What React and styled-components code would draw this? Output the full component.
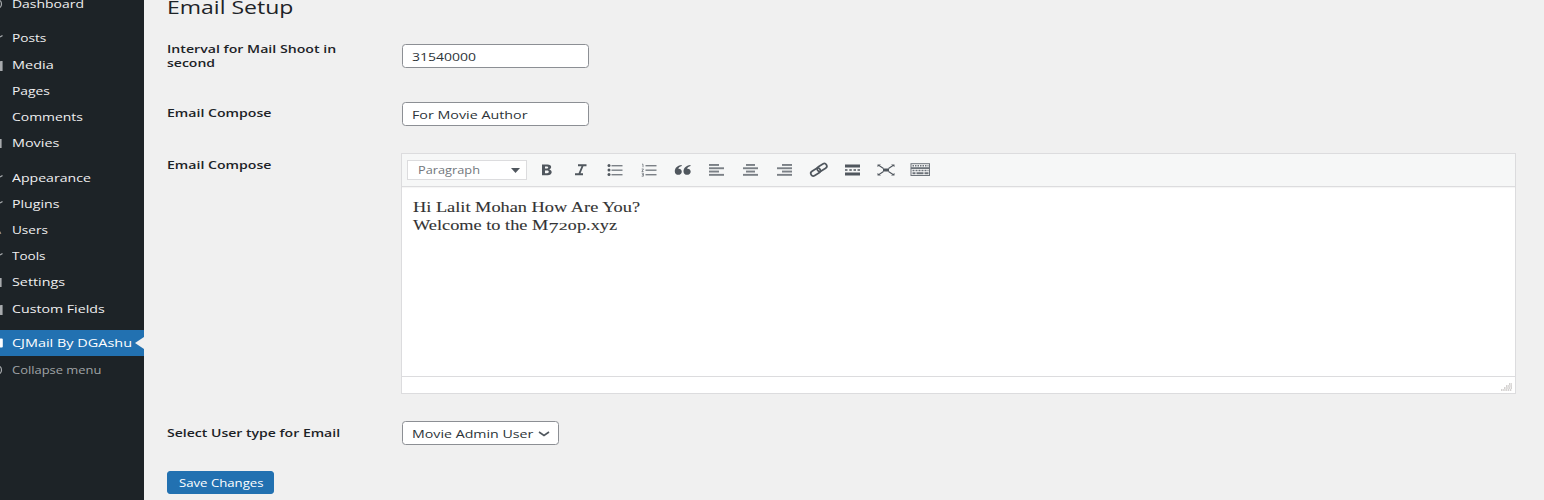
import React, { useLayoutEffect, useRef, useState } from "react";
import styled, { createGlobalStyle } from "styled-components";

const Global = createGlobalStyle`
  *{box-sizing:border-box}
  html,body{margin:0;background:#f0f0f0}
  body{font-family:"Open Sans","Noto Sans",sans-serif;color:#1d2327;overflow:hidden}
`;

const FitBox = styled.span`
  display:block;flex:none;width:${p => p.$w}px;white-space:nowrap;text-align:left;
`;
const FitInner = styled.span`
  display:inline-block;transform-origin:0 50%;white-space:pre;
`;
function Fit({ w, children }) {
  const ref = useRef(null);
  const [k, setK] = useState(1);
  useLayoutEffect(() => { setK(w / ref.current.offsetWidth); }, [w]);
  return <FitBox $w={w}><FitInner ref={ref} style={{ transform: `scaleX(${k})` }}>{children}</FitInner></FitBox>;
}

const Page = styled.div`display:flex;width:1544px;height:500px;overflow:hidden;`;
const Sidebar = styled.nav`
  width:144px;flex:none;background:#1d2327;height:500px;overflow:hidden;
`;
const Menu = styled.div`margin-top:-9px;display:flex;flex-direction:column;gap:8.2px;width:144px;`;
const Group = styled.div``;
const Item = styled.div`
  height:26.2px;display:flex;align-items:center;font-size:11.5px;line-height:16px;
  padding-top:${p => p.$muted ? 1 : 0}px;
  color:${p => p.$muted ? "#a0a3a6" : p.$active ? "#fff" : "#f0f0f1"};
  background:${p => p.$active ? "#2271b1" : "transparent"};
`;
const IconSlot = styled.span`width:12px;height:16px;flex:none;svg{display:block}`;
const Arrow = styled.i`
  margin-left:auto;width:0;height:0;border:solid transparent;border-width:6.5px 9px 6.5px 0;border-right-color:#f0f0f0;
`;
const glyphs = {
  half: <path d="M0 4.500C2 6 2 10 0 11.500" fill="none" stroke="#a7aaad" strokeWidth="1.2" />,
  pin: <path d="M0 7L2.500 5.500" stroke="#a7aaad" strokeWidth="1.3" />,
  block: <rect x="0" y="4" width="2.6" height="10" rx=".5" fill="#a7aaad" />,
  thin: <rect x="0" y="4" width="1.6" height="9" fill="#a7aaad" />,
  user: <path d="M0 9.500L.8 12" stroke="#a7907a" fill="none" />,
  mail: <rect x="-3" y="3.5" width="5.8" height="9" rx="1" fill="#fff" />,
};
const entries = [
  [["Dashboard", 71.5, "half"]],
  [["Posts", 34.5, "pin"], ["Media", 41.5, "block"], ["Pages", 38.5], ["Comments", 71.5], ["Movies", 47.5, "thin"]],
  [["Appearance", 78.5, "pin"], ["Plugins", 48, "pin"], ["Users", 36.5, "user"], ["Tools", 34, "pin"], ["Settings", 53.5, "thin"], ["Custom Fields", 92.5, "block"]],
  [["CJMail By DGAshu", 120.5, "mail", "active"], ["Collapse menu", 90, "half", "muted"]],
];

const Content = styled.main`flex:1;padding:0 0 0 23px;min-width:0;`;
const Title = styled.h1`margin:-5px 0 0;font-weight:400;font-size:18px;line-height:24px;height:24px;`;
const Row = styled.div`display:flex;align-items:flex-start;margin-top:${p => p.$mt}px;height:${p => p.$h}px;`;
const Label = styled.label`
  width:${p => p.$w || 235}px;flex:none;font-size:11.4px;line-height:14px;font-weight:600;
  padding-top:${p => p.$pt || 0}px;margin-top:${p => p.$mt || 0}px;
`;
const Field = styled.div`
  width:${p => p.$w}px;height:24px;border:1px solid #8c8f94;border-radius:3.500px;background:#fff;color:#2c3338;
  display:flex;align-items:center;padding:1px 8px 0 8.500px;font-size:11.5px;line-height:16px;justify-content:space-between;
`;
const Editor = styled.section`width:1115px;height:241px;border:1px solid #dcdcde;background:#fff;display:flex;flex-direction:column;`;
const Toolbar = styled.div`
  height:33px;flex:none;background:#f6f7f7;border-bottom:1px solid #dcdcde;display:flex;align-items:center;padding-left:5px;
  box-shadow:0 1px 1px rgba(0,0,0,.04);
`;
const Format = styled.div`
  width:120px;height:20px;border:1px solid #dcdcde;background:#fff;display:flex;align-items:center;justify-content:space-between;
  padding:0 6px 0 10px;font-size:10.3px;line-height:14px;color:#72777c;margin-right:3px;
`;
const Tool = styled.span`width:34px;height:20px;flex:none;display:flex;align-items:center;justify-content:center;svg{display:block}`;
const Body = styled.div`
  flex:1;padding:12px 0 0 11px;font-family:"Liberation Serif",serif;font-size:14px;line-height:18px;color:#333;
  -webkit-text-stroke:.1px #333;
`;
const Low = styled.span`display:inline-block;transform:translateY(2.500px) scaleX(1.1);margin:0 .4px;`;
const Small = styled.span`display:inline-block;font-size:10.5px;transform:scaleX(1.3);margin:0 1.800px;`;
const Status = styled.div`height:17px;border-top:1px solid #dcdcde;display:flex;justify-content:flex-end;align-items:flex-end;padding:0 3px 2px 0;`;
const Save = styled.button`
  margin:26px 0 0;padding:1px 0 0 10.500px;width:107px;height:23px;border:1px solid #2271b1;border-radius:3px;background:#2271b1;
  color:#fff;font:11px/16px "Open Sans",sans-serif;display:flex;align-items:center;
`;

const C = "#50575e";
const bars = (rows) => rows.map(([x, w], i) => <rect key={i} x={x} y={4 + i * 3.3} width={w} height="1.9" fill="#7b8086" />);
const list = <g fill="#7b8086"><rect x="7.500" y="5" width="11" height="1.4" /><rect x="7.500" y="9.5" width="11" height="1.4" /><rect x="7.500" y="14" width="11" height="1.4" /></g>;
const tools = [
  <path d="M6 4.500h5.500c4.700 0 4.500 4.100 1.700 5 3.800.8 3.300 5.700-1.500 5.700H6zM9 6.400v2.200h1.900c1.800 0 1.800-2.200 0-2.200zM9 10.500v2.700h2.100c2.300 0 2.300-2.700 0-2.700z" fill={C} fillRule="evenodd" />,
  <path d="M8 5.300h8.500M5 14.300h8M13 5L9 14.500" stroke={C} strokeWidth="1.9" fill="none" />,
  <g>{list}<g fill={C}><circle cx="5" cy="5.6" r="1.500" /><circle cx="5" cy="10.1" r="1.500" /><circle cx="5" cy="14.6" r="1.500" /></g></g>,
  <g>{list}<path d="M4 4.200h1v3M3.700 9h1.800L3.900 11.500h1.600M3.700 13.200h1.700v3H3.700M4 14.700h1.400" stroke="#7b8086" strokeWidth=".9" fill="none" /></g>,
  <path d="M9.700 5C5 5.400 2.800 8.300 2.800 11.400c0 4.700 7 4.300 7 .3 0-2.200-1.900-3.200-3.500-2.900.4-1.500 1.700-2.300 3.400-2.700zM18.500 5c-4.700.4-7 3.300-7 6.400 0 4.700 7.200 4.300 7.200.3 0-2.200-1.900-3.200-3.600-2.900.4-1.500 1.700-2.300 3.400-2.700z" fill={C} />,
  <g>{bars([[3, 10], [3, 15], [3, 10], [3, 15]])}</g>,
  <g>{bars([[6, 9], [3, 15], [6, 9], [3, 15]])}</g>,
  <g>{bars([[8, 10], [3, 15], [8, 10], [3, 15]])}</g>,
  <g fill="none" stroke={C} strokeWidth="1.7"><rect x="-5.200" y="-2.6" width="10.400" height="5.2" rx="2.6" transform="translate(14 7.500) rotate(-32)" /><rect x="-5.200" y="-2.600" width="10.400" height="5.200" rx="2.600" transform="translate(7.600 12) rotate(-32)" /></g>,
  <g fill={C}><rect x="3" y="4.500" width="15" height="3" /><rect x="3" y="12.500" width="15" height="3" /><path d="M3 9.300h2.500v1.400H3zM7.300 9.300h2.500v1.400H7.300zM11.500 9.300h2.500v1.400h-2.500zM15.500 9.300H18v1.400h-2.500z" /></g>,
  <g transform="translate(-1 0)"><path d="M4 5.500L8.500 8.500M18 5.500L13.500 8.500M4 14.500L8.500 11.500M18 14.500L13.500 11.500" stroke={C} strokeWidth="1.1" /><rect x="8" y="8.500" width="6" height="3" fill={C} /><path d="M2.500 4.500h3.500l-3.500 2.500zM19.500 4.500H16l3.500 2.500zM2.500 15.500H6l-3.500-2.500zM19.500 15.500H16l3.500-2.500z" fill={C} /></g>,
  <g fill="none" stroke="#6d737a" transform="translate(-.5 0)"><rect x="1.500" y="3.700" width="18.500" height="4" /><path d="M3 5.700h16" strokeDasharray="1.500 1" strokeWidth="1.500" /><rect x="1.500" y="8.500" width="18.500" height="7" /><path d="M3 10.500h16" strokeDasharray="2 1" strokeWidth="1.300" /><path d="M3 13.200h3M7 13.200h7M15 13.200h4" strokeWidth="2" /></g>,
];

export default function App() {
  return <><Global /><Page>
    <Sidebar><Menu>{entries.map((g, i) => <Group key={i}>{g.map(([t, w, icon, state]) =>
      <Item key={t} $active={state === "active"} $muted={state === "muted"}>
        <IconSlot>{icon && <svg width="12" height="16">{glyphs[icon]}</svg>}</IconSlot>
        <Fit w={w}>{t}</Fit>{state === "active" && <Arrow />}
      </Item>)}</Group>)}</Menu></Sidebar>
    <Content>
      <Title><Fit w={126.5}>Email Setup</Fit></Title>
      <Row $mt={25} $h={58}><Label $mt={-2}><Fit w={169}>Interval for Mail Shoot in</Fit><Fit w={48}>second</Fit></Label><Field $w={187}><Fit w={64.5}>31540000</Fit></Field></Row>
      <Row $mt={0} $h={51}><Label $pt={4}><Fit w={104}>Email Compose</Fit></Label><Field $w={187}><Fit w={115.5}>For Movie Author</Fit></Field></Row>
      <Row $mt={0} $h={241}><Label $w={234} $pt={5}><Fit w={104}>Email Compose</Fit></Label>
        <Editor>
          <Toolbar><Format><Fit w={62}>Paragraph</Fit><svg width="9" height="5"><path d="M0 0h9L4.500 5z" fill={C} /></svg></Format>
            {tools.map((t, i) => <Tool key={i}><svg width="22" height="20">{t}</svg></Tool>)}
          </Toolbar>
          <Body><Fit w={226.5}>Hi Lalit Mohan How Are You?</Fit><Fit w={204}>Welcome to the M<Low>7</Low><Small>20</Small>p.xyz</Fit></Body>
          <Status><svg width="11" height="8"><path d="M0 7h11M3 5h8M5 3h6M8 1h3" stroke="#a9a4a2" strokeDasharray="1.500 .7" /></svg></Status>
        </Editor></Row>
      <Row $mt={27} $h={24}><Label $pt={5}><Fit w={172.5}>Select User type for Email</Fit></Label>
        <Field $w={157}><Fit w={121}>Movie Admin User</Fit><svg width="12" height="6"><path d="M1 1l5 3.500L11 1" stroke="#50575e" strokeWidth="1.600" fill="none" /></svg></Field></Row>
      <Save><Fit w={85}>Save Changes</Fit></Save>
    </Content>
  </Page></>;
}
